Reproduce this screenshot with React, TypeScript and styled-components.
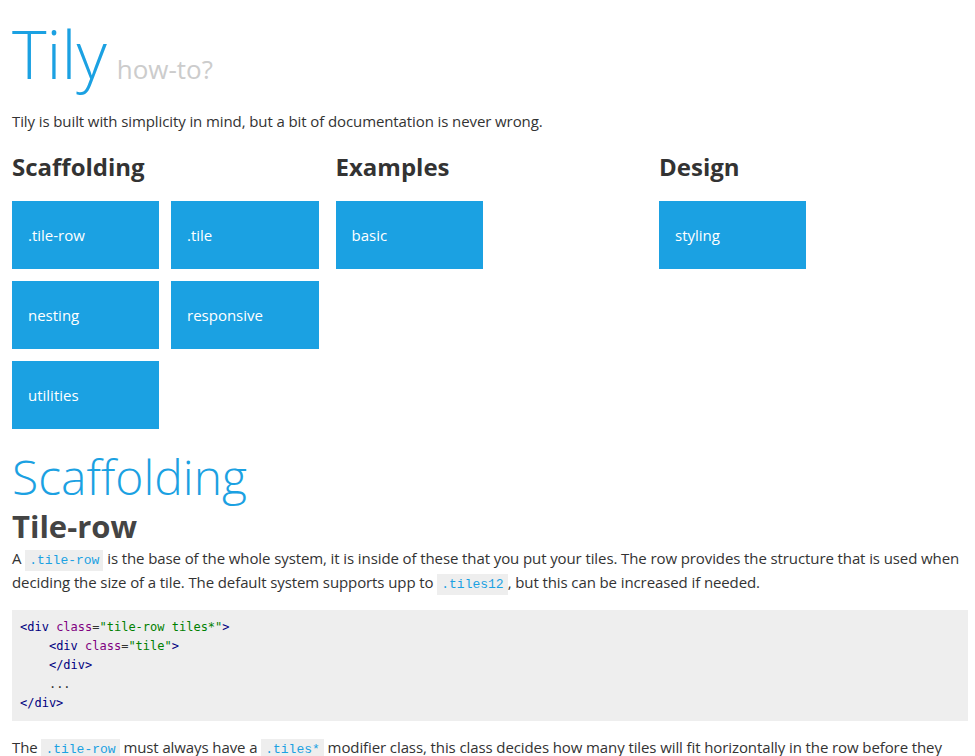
import React from "react";
import styled, { createGlobalStyle } from "styled-components";

const Global = createGlobalStyle`
  html, body { margin: 0; padding: 0; background: #fff; }
  body { font-family: "Open Sans", "Noto Sans", sans-serif; color: #333; }
`;

const BLUE = "#1ba1e2";

const Page = styled.div`
  padding: 0 7px 0 12px;
`;

const Title = styled.h1`
  margin: 14px 0 0;
  display: flex;
  align-items: baseline;
  gap: 10px;
  font-weight: 300;
  font-size: 66px;
  line-height: 79px;
  color: ${BLUE};
`;

const Sub = styled.small`
  font-size: 26px;
  color: #ccc;
  font-weight: 400;
`;

const Para = styled.p<{ $m?: string }>`
  margin: ${(p) => p.$m || "0"};
  font-size: 15px;
  line-height: 24px;
  letter-spacing: -0.1px;
  color: #333;
`;

const Columns = styled.div`
  display: grid;
  grid-template-columns: repeat(3, 311.5px);
  column-gap: 12px;
  margin-top: 18px;
`;

const Column = styled.section`
  display: flex;
  flex-direction: column;
`;

const ColTitle = styled.h2`
  margin: 0 0 18px;
  font-size: 24px;
  line-height: 32px;
  font-weight: 700;
  color: #333;
`;

const TileGrid = styled.div`
  display: grid;
  grid-template-columns: 147px 148px;
  gap: 12px;
`;

const Tile = styled.a`
  height: 68px;
  background: ${BLUE};
  color: #fff;
  display: flex;
  align-items: center;
  padding-left: 16px;
  font-size: 15px;
  text-decoration: none;
`;

const SectionTitle = styled.h1`
  margin: 20px 0 0;
  font-size: 48px;
  line-height: 56px;
  font-weight: 300;
  color: ${BLUE};
`;

const SubTitle = styled.h2`
  margin: 1px 0 0;
  font-size: 31px;
  line-height: 40px;
  font-weight: 700;
  color: #444;
`;

const Code = styled.code`
  font-family: "Liberation Mono", monospace;
  font-size: 13px;
  line-height: 1;
  letter-spacing: 0;
  color: ${BLUE};
  background: #eee;
  padding: 3px 4px;
`;

const Pre = styled.pre`
  margin: 16px 0 0;
  background: #eee;
  padding: 8px 8px;
  font-family: "DejaVu Sans Mono", monospace;
  font-size: 12px;
  line-height: 19px;
  color: #000080;
`;

const Tag = styled.span`color: #000080;`;
const Attr = styled.span`color: #800080;`;
const Str = styled.span`color: #008000;`;
const Plain = styled.span`color: #333;`;

const columns = [
  { title: "Scaffolding", tiles: [".tile-row", ".tile", "nesting", "responsive", "utilities"] },
  { title: "Examples", tiles: ["basic"] },
  { title: "Design", tiles: ["styling"] },
];

export default function App() {
  return (
    <Page>
      <Global />
      <Title>
        Tily<Sub>how-to?</Sub>
      </Title>
      <Para $m="0">Tily is built with simplicity in mind, but a bit of documentation is never wrong.</Para>
      <Columns>
        {columns.map((c) => (
          <Column key={c.title}>
            <ColTitle>{c.title}</ColTitle>
            <TileGrid>
              {c.tiles.map((t) => (
                <Tile key={t}>{t}</Tile>
              ))}
            </TileGrid>
          </Column>
        ))}
      </Columns>
      <SectionTitle>Scaffolding</SectionTitle>
      <SubTitle>Tile-row</SubTitle>
      <Para>
        A <Code>.tile-row</Code> is the base of the whole system, it is inside of these that you put your tiles. The row
        provides the structure that is used when deciding the size of a tile. The default system supports upp to{" "}
        <Code>.tiles12</Code>, but this can be increased if needed.
      </Para>
      <Pre>
        <Tag>&lt;div </Tag><Attr>class</Attr><Plain>=</Plain><Str>"tile-row tiles*"</Str><Tag>&gt;</Tag>{"\n"}
        {"    "}<Tag>&lt;div </Tag><Attr>class</Attr><Plain>=</Plain><Str>"tile"</Str><Tag>&gt;</Tag>{"\n"}
        {"    "}<Tag>&lt;/div&gt;</Tag>{"\n"}
        {"    "}<Plain>...</Plain>{"\n"}
        <Tag>&lt;/div&gt;</Tag>
      </Pre>
      <Para $m="14px 0 0">
        The <Code>.tile-row</Code> must always have a <Code>.tiles*</Code> modifier class, this class decides how many
        tiles will fit horizontally in the row before they wrap.
      </Para>
    </Page>
  );
}
